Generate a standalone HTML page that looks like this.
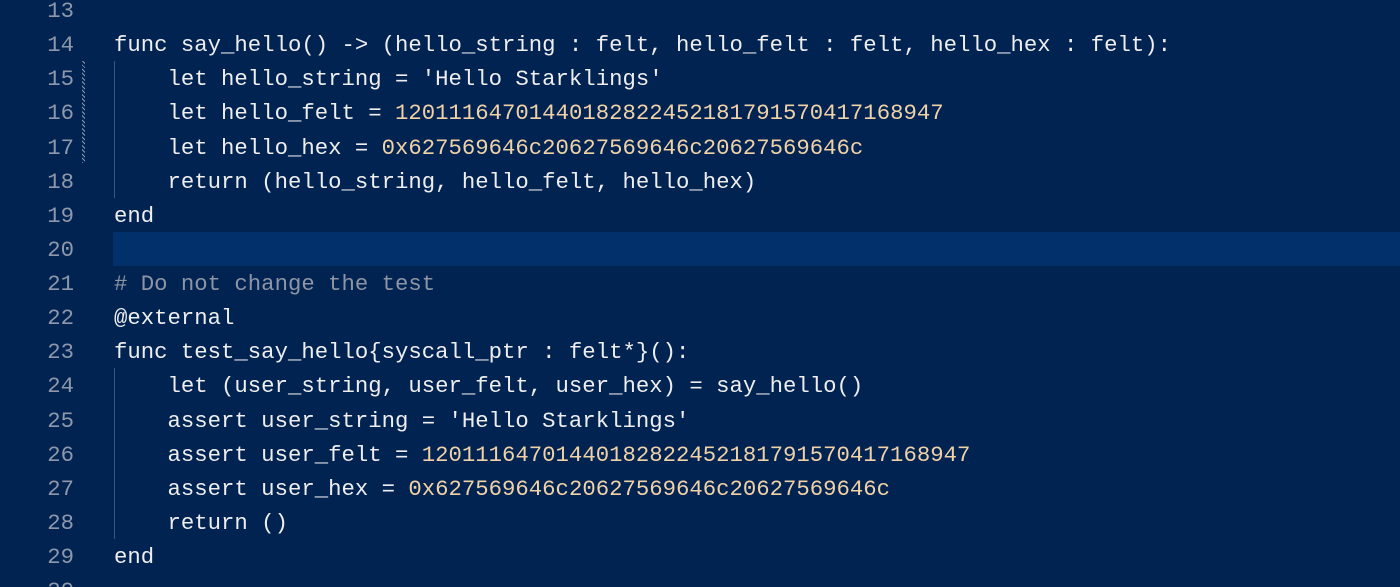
<!DOCTYPE html>
<html><head><style>
html,body{margin:0;padding:0;width:1400px;height:587px;overflow:hidden;background:#012352;}
.ed{position:relative;width:1400px;height:587px;font-family:"Liberation Mono",monospace;font-size:22.3px;color:#eeeeee;}
.l{position:absolute;left:0;width:1400px;height:34.13px;line-height:34.13px;white-space:pre;}
.n{position:absolute;left:0;width:74px;text-align:right;color:#8e98aa;}
.c{position:absolute;left:114px;}
.num{color:#f0d2a6}
.cm{color:#8d95a5}
.hl{position:absolute;left:113px;right:0;background:#02306b;}
.g{position:absolute;left:114px;width:1px;background:#3a5680;}
.d{position:absolute;left:82px;width:3px;background:repeating-linear-gradient(45deg,#8e98aa 0 1px,transparent 1px 3px);}
</style></head><body><div class="ed">
<div class="hl" style="top:232px;height:34px"></div>
<div class="g" style="top:61px;height:137px"></div>
<div class="g" style="top:368px;height:171px"></div>
<div class="d" style="top:61px;height:102px"></div>
<div class="l" style="top:-6px"><span class="n">13</span></div>
<div class="l" style="top:28.1px"><span class="n">14</span><span class="c">func say_hello() -&gt; (hello_string : felt, hello_felt : felt, hello_hex : felt):</span></div>
<div class="l" style="top:62.3px"><span class="n">15</span><span class="c">    let hello_string = 'Hello Starklings'</span></div>
<div class="l" style="top:96.4px"><span class="n">16</span><span class="c">    let hello_felt = <span class="num">12011164701440182822452181791570417168947</span></span></div>
<div class="l" style="top:130.5px"><span class="n">17</span><span class="c">    let hello_hex = <span class="num">0x627569646c20627569646c20627569646c</span></span></div>
<div class="l" style="top:164.7px"><span class="n">18</span><span class="c">    return (hello_string, hello_felt, hello_hex)</span></div>
<div class="l" style="top:198.8px"><span class="n">19</span><span class="c">end</span></div>
<div class="l" style="top:232.9px"><span class="n">20</span></div>
<div class="l" style="top:267.1px"><span class="n">21</span><span class="c cm"># Do not change the test</span></div>
<div class="l" style="top:301.2px"><span class="n">22</span><span class="c">@external</span></div>
<div class="l" style="top:335.3px"><span class="n">23</span><span class="c">func test_say_hello{syscall_ptr : felt*}():</span></div>
<div class="l" style="top:369.4px"><span class="n">24</span><span class="c">    let (user_string, user_felt, user_hex) = say_hello()</span></div>
<div class="l" style="top:403.6px"><span class="n">25</span><span class="c">    assert user_string = 'Hello Starklings'</span></div>
<div class="l" style="top:437.7px"><span class="n">26</span><span class="c">    assert user_felt = <span class="num">12011164701440182822452181791570417168947</span></span></div>
<div class="l" style="top:471.8px"><span class="n">27</span><span class="c">    assert user_hex = <span class="num">0x627569646c20627569646c20627569646c</span></span></div>
<div class="l" style="top:506px"><span class="n">28</span><span class="c">    return ()</span></div>
<div class="l" style="top:540.1px"><span class="n">29</span><span class="c">end</span></div>
<div class="l" style="top:574.2px"><span class="n">30</span></div>
</div></body></html>
